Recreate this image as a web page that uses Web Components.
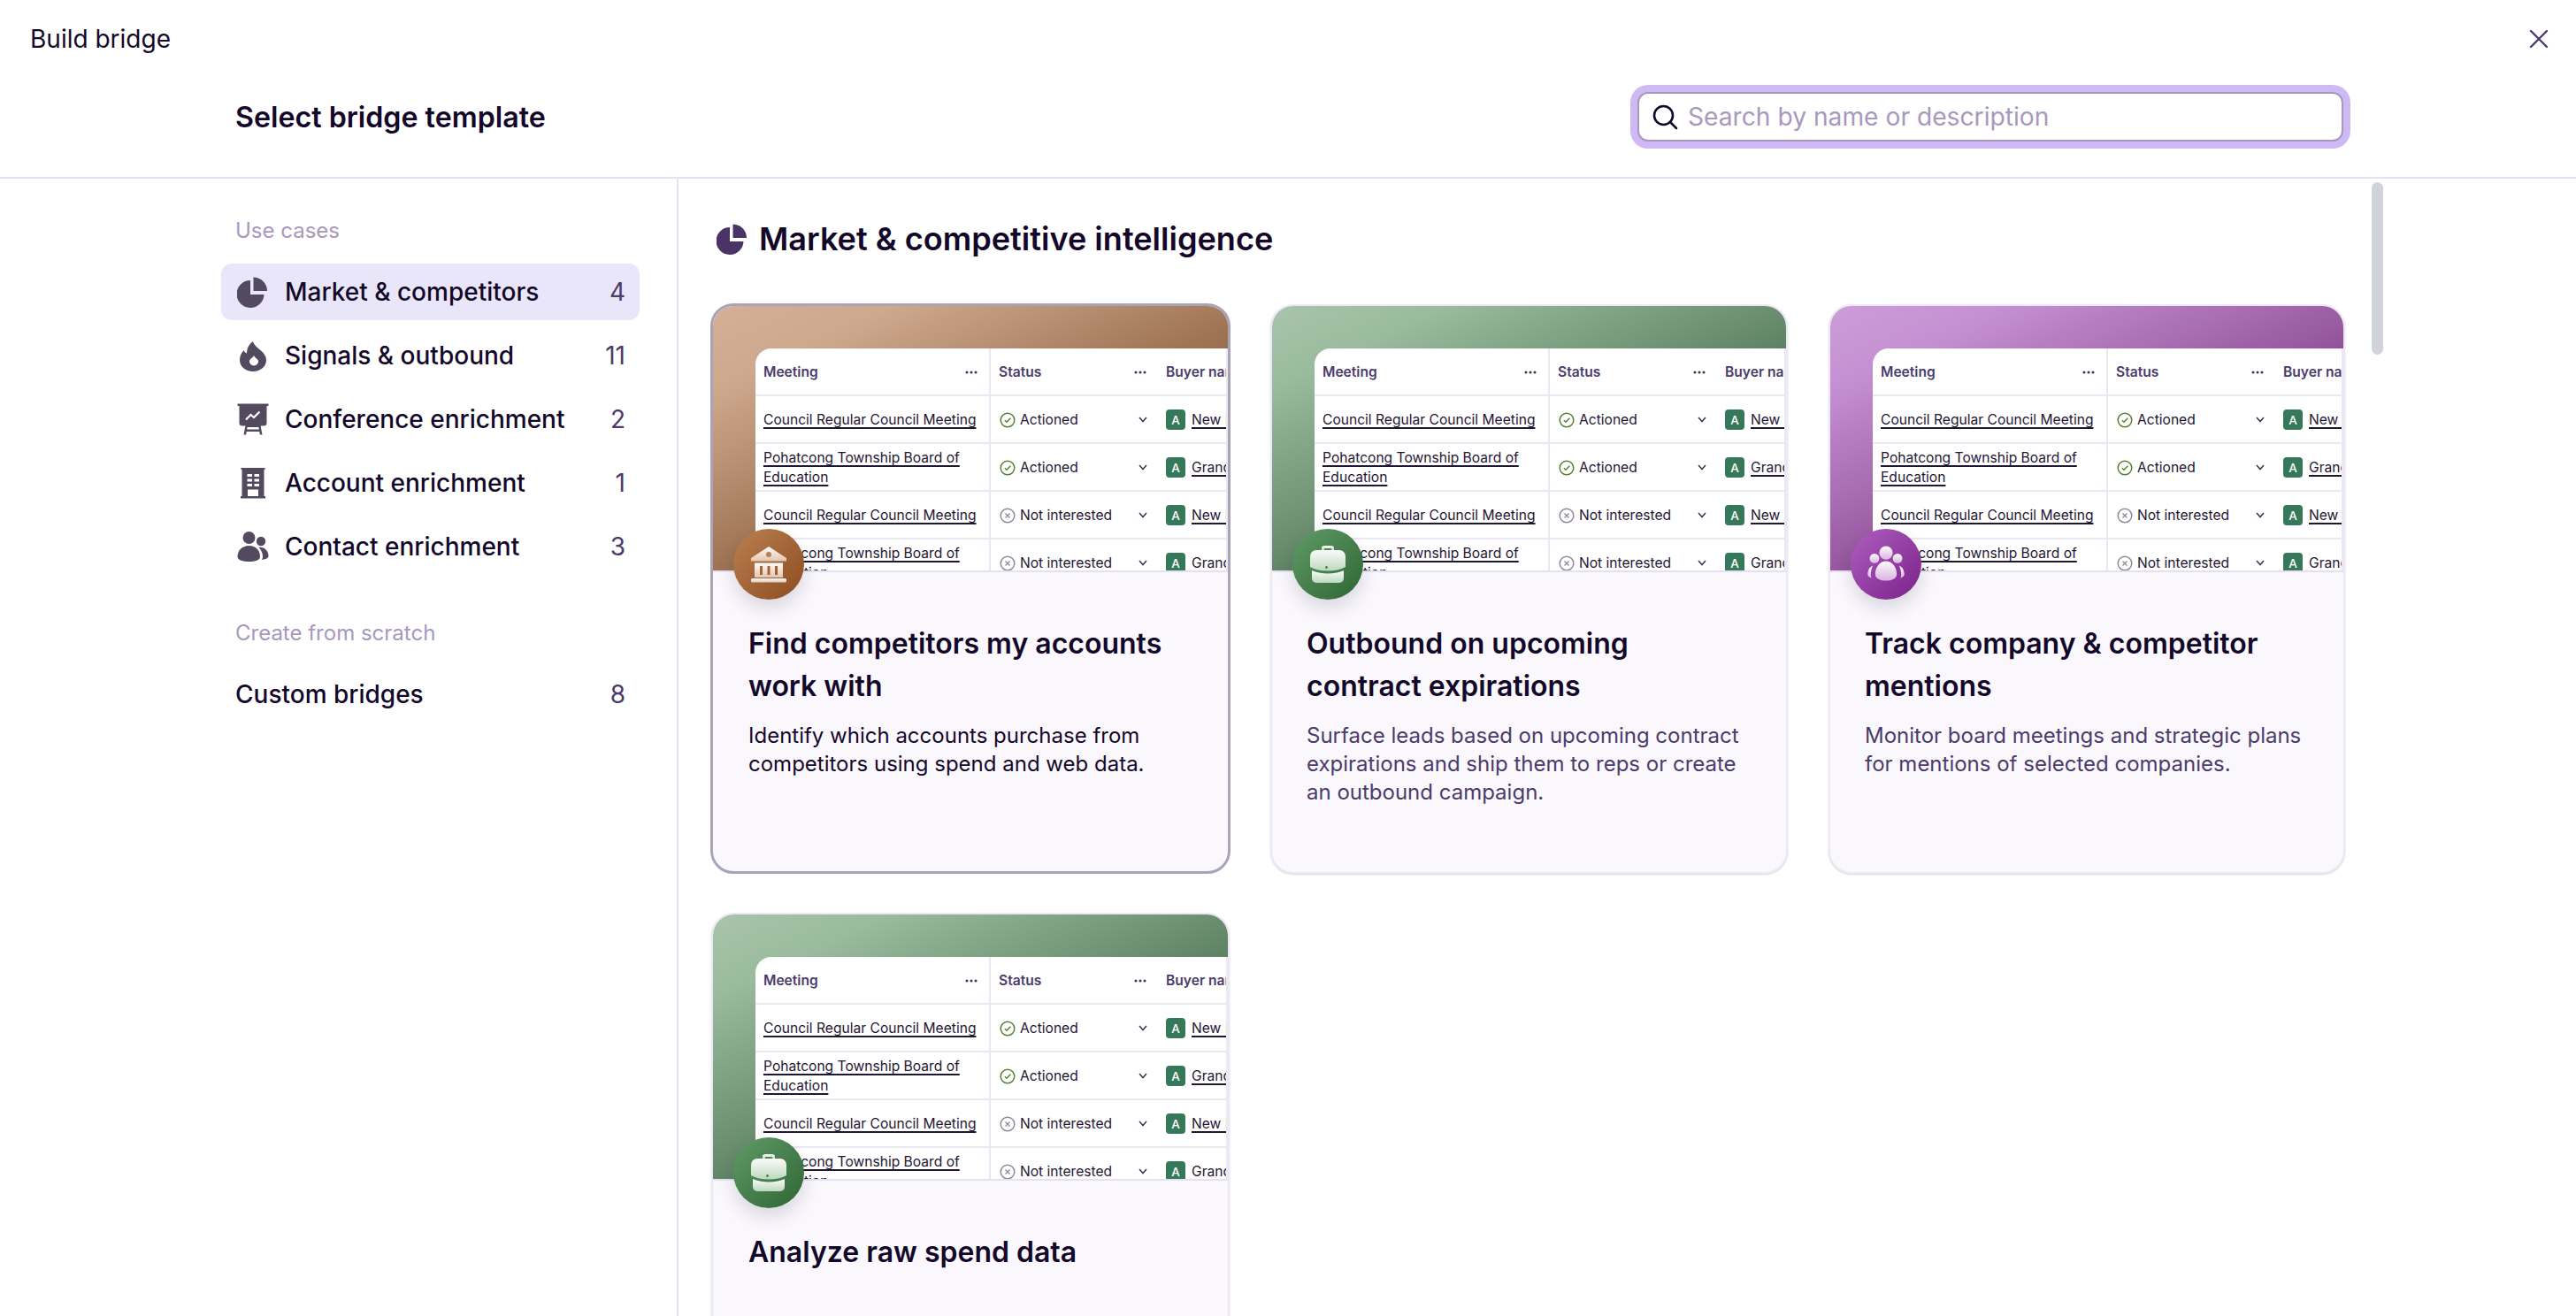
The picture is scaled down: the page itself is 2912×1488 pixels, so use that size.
<!DOCTYPE html>
<html lang="en">
<head>
<meta charset="utf-8">
<title>Build bridge</title>
<style>
  html, body { margin: 0; height: 100%; background: #fff; }
  body { font-family: Inter, "Liberation Sans", sans-serif; color: #14082a; overflow: hidden; }
</style>
</head>
<body>
<bridge-modal></bridge-modal>

<script>
// Shapes for the sidebar and heading icons, 36x36, fill follows currentColor
const GLYPHS = {
  pie: `<path d="M15 5A15.5 15.5 0 1 0 30.5 21H15Z"/><path d="M18.500 1.500A15.500 15.500 0 0 1 34 17H18.500Z"/>`,
  flame: `<path fill-rule="evenodd" d="M18 2c1 4 5 7 9 10.500 3.500 3 6 6.500 6 10.500 0 7.500-6.500 13-15 13S3 30.500 3 23c0-4 1.500-7.500 4.500-11 .8 1.800 1.800 3 3.500 3.500C11 10 13.500 5 18 2ZM19 18c-.5 2-5 3.500-5 6.500a5 5 0 0 0 10 0c0-2.500-3.500-3.500-5-6.500Z"/>`,
  board: `<path d="M.5 .5h35v2.500h-2V22a3.500 3.500 0 0 1-3.500 3.500H6A3.500 3.500 0 0 1 2.500 22V3h-2Z"/><path d="M9.500 25 7.500 35.500h2.600l.6-3.500h14.600l.6 3.500h2.600L26.500 25Zm1.700 4.500.4-2.500h12.800l.4 2.500Z"/><path d="M10 18.500l5.500-5.500 3.500 3 6.500-6.500" fill="none" stroke="#fff" stroke-width="2.200"/>`,
  tower: `<path fill-rule="evenodd" d="M4.500 1h27v2h-1v30h1.500v2.500H4V33h1.500V3h-1ZM11.500 8v3h5.500V8Zm8 0v3h5.500V8Zm-8 5.500v3h5.500v-3Zm8 0v3h5.500v-3Zm-8 5.500v3h5.500v-3Zm8 0v3h5.500v-3ZM12 25.500V33h12v-7.500Z"/>`,
  people: `<circle cx="13.500" cy="8" r="7"/><circle cx="27" cy="12" r="5.200"/><path d="M.5 29.500C.5 22 6 17 13.500 17s12.500 5 12.500 12.500c0 4-6 5.500-12.500 5.500S.5 33.500.5 29.500Z"/><path d="M24.500 19c5.500-1 11 3.500 11 9.500 0 2.500-3 4-7.500 4.300.5-1 1-2 1-3.300 0-4-1.500-7.500-4.500-10.500Z"/>`
};

// Medallion icons, 48x48, painted with the gradient "ink" of the medallion
const BADGES = {
  bank: `<path d="M24 4 44 17v3.500H4V17Z"/><circle cx="24" cy="13" r="3" fill="var(--disc)"/><path fill-rule="evenodd" d="M8 22.500h32V39H8ZM14 26v10h3V26Zm8.500 0v10h3V26Zm8.500 0v10h3V26Z"/><rect x="4" y="40" width="40" height="4.500" rx="1.500"/>`,
  case: `<path d="M17 8.500V6a3 3 0 0 1 3-3h8a3 3 0 0 1 3 3v2.500h-3V6.500a.5.5 0 0 0-.5-.5h-7a.5.5 0 0 0-.5.5v2Z"/><path fill-rule="evenodd" d="M11 8h26a7 7 0 0 1 7 7v12c-5 3-12 4.500-20 4.500S9 30 4 27V15a7 7 0 0 1 7-7Zm13 19.500a1.500 1.500 0 1 0 0 .1Z"/><path d="M6 31c5 2 11 3.500 18 3.500S37 33 42 31v9a5 5 0 0 1-5 5H11a5 5 0 0 1-5-5Z"/>`,
  group: `<g transform="translate(2.400 3) scale(.9)"><circle cx="24" cy="9" r="8.500"/><circle cx="9.500" cy="16" r="6"/><circle cx="38.500" cy="16" r="6"/><path d="M10.500 36c0-9.500 6-16.500 13.500-16.500S37.500 26.500 37.500 36c0 5-6 8-13.500 8s-13.500-3-13.500-8Z"/><path d="M7.500 25c-4 1.500-6.500 6-6.500 11 0 2 1.500 3.500 5 4.500-1-1.500-1-3-1-4.500 0-4 1-7.500 2.500-11Z"/><path d="M40.500 25c4 1.500 6.500 6 6.500 11 0 2-1.500 3.500-5 4.500 1-1.500 1-3 1-4.500 0-4-1-7.500-2.500-11Z"/></g>`
};

class NavIcon extends HTMLElement {
  connectedCallback() {
    const root = this.shadowRoot || this.attachShadow({ mode: 'open' });
    root.innerHTML = `
      <style>
        :host { display: inline-flex; width: var(--icon-size, 36px); height: var(--icon-size, 36px); flex: none; }
        svg { width: 100%; height: 100%; fill: currentColor; }
      </style>
      <svg viewBox="0 0 36 36" aria-hidden="true">${GLYPHS[this.getAttribute('name')]}</svg>`;
  }
}

class SearchBox extends HTMLElement {
  constructor() {
    super();
    this.attachShadow({ mode: 'open' });
    this.shadowRoot.innerHTML = `
      <style>
        :host {
          display: flex; align-items: center; gap: 11px; box-sizing: border-box;
          width: 798px; height: 56px; padding: 0 14px;
          background: #fff; border: 2px solid #a898bd; border-radius: 12px;
          box-shadow: 0 0 0 8px #cfb9f5;
          font-size: 28.200px; color: #a898bd;
        }
        svg { width: 30px; height: 30px; flex: none; }
      </style>
      <svg viewBox="0 0 30 30" fill="none" stroke="#14082a" stroke-width="2.600" stroke-linecap="round">
        <circle cx="13.500" cy="13.500" r="10.500"/><path d="M21.500 21.500 28 28"/>
      </svg>
      <span><slot></slot></span>`;
  }
}

class ModalHeader extends HTMLElement {
  constructor() {
    super();
    this.attachShadow({ mode: 'open' });
    this.shadowRoot.innerHTML = `
      <style>
        :host { display: block; height: 200px; border-bottom: 2px solid #e6e1f2; }
        .top { display: flex; align-items: center; justify-content: space-between; height: 88px; padding: 0 31px 0 34px; font-size: 28px; }
        .top svg { width: 22px; height: 22px; }
        .row { display: flex; align-items: center; justify-content: space-between; height: 88px; padding: 0 263px 0 266px; }
        h1 { margin: 0; font-size: 32.200px; font-weight: 600; }
      </style>
      <div class="top">
        <span>Build bridge</span>
        <svg viewBox="0 0 22 22" fill="none" stroke="#4a3b6b" stroke-width="2.400" stroke-linecap="round"><path d="M2 2 20 20M20 2 2 20"/></svg>
      </div>
      <div class="row">
        <h1>Select bridge template</h1>
        <search-box>Search by name or description</search-box>
      </div>`;
  }
}

class NavItem extends HTMLElement {
  constructor() {
    super();
    this.attachShadow({ mode: 'open' });
    this.shadowRoot.innerHTML = `
      <style>
        :host {
          display: flex; align-items: center; height: 64px; padding: 0 16px 0 18px;
          border-radius: 12px; font-size: 28px; font-weight: 450; color: #14082a;
        }
        :host([active]) { background: #e9e6fa; }
        :host([plain]) { padding-left: 16px; }
        nav-icon { margin-right: 18px; color: #544a60; }
        .label { flex: 1; }
        .count { font-weight: 400; color: #4a3b6b; }
      </style>
      <slot name="icon"></slot>
      <span class="label"><slot></slot></span>
      <span class="count">${this.getAttribute('count')}</span>`;
    if (this.hasAttribute('icon')) {
      const icon = document.createElement('nav-icon');
      icon.setAttribute('name', this.getAttribute('icon'));
      this.shadowRoot.querySelector('slot[name=icon]').replaceWith(icon);
    }
  }
}

class SideNav extends HTMLElement {
  constructor() {
    super();
    this.attachShadow({ mode: 'open' });
    this.shadowRoot.innerHTML = `
      <style>
        :host {
          display: flex; flex-direction: column; gap: 8px; box-sizing: border-box; flex: none;
          width: 767px; padding: 43px 42px 0 250px; border-right: 2px solid #e6e1f2;
        }
        .label { font-size: 24px; line-height: 32px; color: #a898bd; padding-left: 16px; margin-bottom: 13px; }
        .label.next { margin-top: 42px; }
      </style>
      <div class="label">Use cases</div>
      <nav-item icon="pie" count="4" active>Market &amp; competitors</nav-item>
      <nav-item icon="flame" count="11">Signals &amp; outbound</nav-item>
      <nav-item icon="board" count="2">Conference enrichment</nav-item>
      <nav-item icon="tower" count="1">Account enrichment</nav-item>
      <nav-item icon="people" count="3">Contact enrichment</nav-item>
      <div class="label next">Create from scratch</div>
      <nav-item plain count="8">Custom bridges</nav-item>`;
  }
}

class StatusCell extends HTMLElement {
  constructor() {
    super();
    this.attachShadow({ mode: 'open' });
    const done = this.getAttribute('kind') === 'done';
    this.shadowRoot.innerHTML = `
      <style>
        :host { display: flex; align-items: center; box-sizing: border-box; padding: 1px 10px 0; gap: 5px; }
        svg.mark { width: 18px; height: 18px; flex: none; }
        span { flex: 1; white-space: nowrap; }
        svg.chev { width: 10px; height: 7px; margin-right: 2px; }
      </style>
      <svg class="mark" viewBox="0 0 18 18" fill="none">
        <circle cx="9" cy="9" r="7.800" stroke="${done ? '#55812f' : '#8d8a96'}" stroke-width="1.500"/>
        ${done
          ? '<path d="M5.800 9.300 8 11.300 12.300 6.800" stroke="#55812f" stroke-width="1.500"/>'
          : '<path d="M6.500 6.500 11.500 11.500M11.500 6.500 6.500 11.500" stroke="#8d8a96" stroke-width="1.300"/>'}
      </svg>
      <span><slot></slot></span>
      <svg class="chev" viewBox="0 0 10 7" fill="none" stroke="#3c3350" stroke-width="1.500"><path d="M1 1 5 5.500 9 1"/></svg>`;
  }
}

class BuyerCell extends HTMLElement {
  constructor() {
    super();
    this.attachShadow({ mode: 'open' });
    this.shadowRoot.innerHTML = `
      <style>
        :host { display: flex; align-items: center; gap: 7px; padding: 1px 0 0 9px; white-space: nowrap; overflow: hidden; }
        b { flex: none; display: grid; place-items: center; width: 22px; height: 23px; border-radius: 4px; background: #36795a; color: #fff; font-size: 13.500px; font-weight: 500; }
        u { text-decoration-thickness: 1.500px; text-underline-offset: 3px; text-decoration-skip-ink: none; }
      </style>
      <b>A</b><u><slot></slot></u>`;
  }
}

class MiniTable extends HTMLElement {
  constructor() {
    super();
    this.attachShadow({ mode: 'open' });
    const rows = [
      ['Council Regular Council Meeting', 'done', 'Actioned', 'New Lisbon'],
      ['Pohatcong Township Board of Education', 'done', 'Actioned', 'Grand Rapids'],
      ['Council Regular Council Meeting', 'no', 'Not interested', 'New Lisbon'],
      ['Pohatcong Township Board of Education', 'no', 'Not interested', 'Grand Rapids']
    ];
    const dots = '<svg viewBox="0 0 14 4" fill="#3c3350"><circle cx="2" cy="2" r="1.500"/><circle cx="7" cy="2" r="1.500"/><circle cx="12" cy="2" r="1.500"/></svg>';
    this.shadowRoot.innerHTML = `
      <style>
        :host {
          display: grid; grid-template-columns: 266px 189px 1fr; grid-auto-rows: 54px;
          background: #fff; border-top-left-radius: 18px; overflow: hidden;
          font-size: 15.600px; line-height: 22px; color: #1f1633;
        }
        .cell { border-right: 2px solid #ebe8f3; border-bottom: 2px solid #ebe8f3; box-sizing: border-box; min-width: 0; }
        .cell:nth-child(3n) { border-right: 0; }
        .head { display: flex; align-items: center; justify-content: space-between; padding: 1px 13px 0 9px; font-weight: 600; color: #4a3b6b; white-space: nowrap; overflow: hidden; }
        .head svg { width: 14px; height: 4px; flex: none; }
        .head.last { justify-content: flex-start; }
        .name { display: flex; align-items: center; padding: 1px 9px 0; }
        .name span { text-decoration: underline; text-decoration-thickness: 1.500px; text-underline-offset: 3px; text-decoration-skip-ink: none; }
      </style>
      <div class="cell head">Meeting${dots}</div>
      <div class="cell head">Status${dots}</div>
      <div class="cell head last">Buyer name</div>
      ${rows.map(r => `
        <div class="cell name"><span>${r[0]}</span></div>
        <status-cell class="cell" kind="${r[1]}">${r[2]}</status-cell>
        <buyer-cell class="cell">${r[3]}</buyer-cell>`).join('')}`;
  }
}

class BadgeDisc extends HTMLElement {
  connectedCallback() {
    const root = this.shadowRoot || this.attachShadow({ mode: 'open' });
    root.innerHTML = `
      <style>
        :host {
          position: absolute; left: 23px; top: 252px; width: 80px; height: 80px;
          display: grid; place-items: center; border-radius: 50%;
          background: linear-gradient(135deg, var(--disc-a), var(--disc-b));
          box-shadow: 0 10px 20px rgba(30, 20, 50, .14);
          --disc: var(--disc-a);
        }
        svg { width: 48px; height: 48px; }
      </style>
      <svg viewBox="0 0 48 48" fill="url(#ink)">
        <defs><linearGradient id="ink" x1="0" y1="0" x2="0" y2="1">
          <stop offset="0" stop-color="#fdfbfb"/><stop offset="1" stop-color="var(--ink-end)"/>
        </linearGradient></defs>
        ${BADGES[this.getAttribute('name')]}
      </svg>`;
  }
}

class TemplateCard extends HTMLElement {
  constructor() {
    super();
    this.attachShadow({ mode: 'open' });
    this.shadowRoot.innerHTML = `
      <style>
        :host {
          display: flex; flex-direction: column; position: relative; box-sizing: border-box;
          height: 644px; background: #faf8fd; border: 2px solid #ece8f5; border-radius: 26px;
          box-shadow: 0 1px 2px rgba(40, 30, 70, .2);
          overflow: hidden;
        }
        :host([tone=brown]) { --a: #d4ae96; --b: #cfa98e; --c: #976b4b; --disc-a: #bb7f50; --disc-b: #8c4d20; --ink-end: #e3c6ae; }
        :host([tone=green]) { --a: #a9c4ab; --b: #9abb9d; --c: #5a7f60; --disc-a: #609b67; --disc-b: #2e6534; --ink-end: #bcd8bf; }
        :host([tone=purple]) { --a: #cb9dd8; --b: #c590d2; --c: #8f4f96; --disc-a: #ae5fc0; --disc-b: #7a2188; --ink-end: #d9b4e2; }
        :host([hovered]) { border: 3px solid #a9a3b8; margin: -1px -1.500px 0 -1px; height: 645px; box-shadow: none; }
        :host([hovered]) .text p { color: #14082a; }
        :host([first]) .text { padding-left: 40px; }
        .art {
          flex: none; box-sizing: border-box; height: 301px; padding: 48px 0 0 48px; overflow: hidden;
          background: linear-gradient(155deg, var(--a) 0%, var(--b) 16%, var(--c) 58%);
          border-bottom: 2px solid #e6e1f2;
        }
        .text { padding: 57px 44px 0 39px; }
        h3 { margin: 0; font-size: 32px; line-height: 48px; font-weight: 600; color: #14082a; }
        p { margin: 16px 0 0; font-size: 24px; line-height: 32px; color: #4a3b6b; }
      </style>
      <div class="art"><mini-table></mini-table></div>
      <badge-disc name="${this.getAttribute('badge')}"></badge-disc>
      <div class="text">
        <h3><slot name="title"></slot></h3>
        <p><slot></slot></p>
      </div>`;
  }
}

class TemplateList extends HTMLElement {
  constructor() {
    super();
    this.attachShadow({ mode: 'open' });
    this.shadowRoot.innerHTML = `
      <style>
        :host { display: block; position: relative; flex: 1; min-width: 0; overflow: hidden; padding: 46px 261px 0 37px; }
        h2 { display: flex; align-items: center; gap: 12px; margin: 0 0 52px 6px; font-size: 36.100px; line-height: 44px; font-weight: 600; color: #14082a; }
        nav-icon { color: #4a3367; }
        .grid { display: grid; grid-template-columns: 585.500px 584.500px 584px; gap: 44px 46.500px; }
        .thumb { position: absolute; left: 1914px; top: 4px; width: 13px; height: 195px; border-radius: 7px; background: #d0d3da; }
      </style>
      <h2><nav-icon name="pie"></nav-icon>Market &amp; competitive intelligence</h2>
      <div class="grid"><slot></slot></div>
      <div class="thumb"></div>`;
  }
}

class BridgeModal extends HTMLElement {
  constructor() {
    super();
    this.attachShadow({ mode: 'open' });
    this.shadowRoot.innerHTML = `
      <style>
        :host { display: flex; flex-direction: column; height: 1488px; overflow: hidden; }
        .body { display: flex; flex: 1; min-height: 0; }
      </style>
      <modal-header></modal-header>
      <div class="body">
        <side-nav></side-nav>
        <template-list>
          <template-card tone="brown" badge="bank" hovered first>
            <span slot="title">Find competitors my accounts work with</span>
            Identify which accounts purchase from competitors using spend and web data.
          </template-card>
          <template-card tone="green" badge="case">
            <span slot="title">Outbound on upcoming contract expirations</span>
            Surface leads based on upcoming contract expirations and ship them to reps or create an outbound campaign.
          </template-card>
          <template-card tone="purple" badge="group">
            <span slot="title">Track company &amp; competitor mentions</span>
            Monitor board meetings and strategic plans for mentions of selected companies.
          </template-card>
          <template-card tone="green" badge="case" first>
            <span slot="title">Analyze raw spend data</span>
          </template-card>
        </template-list>
      </div>`;
  }
}

customElements.define('nav-icon', NavIcon);
customElements.define('search-box', SearchBox);
customElements.define('modal-header', ModalHeader);
customElements.define('nav-item', NavItem);
customElements.define('side-nav', SideNav);
customElements.define('status-cell', StatusCell);
customElements.define('buyer-cell', BuyerCell);
customElements.define('mini-table', MiniTable);
customElements.define('badge-disc', BadgeDisc);
customElements.define('template-card', TemplateCard);
customElements.define('template-list', TemplateList);
customElements.define('bridge-modal', BridgeModal);
</script>
</body>
</html>
